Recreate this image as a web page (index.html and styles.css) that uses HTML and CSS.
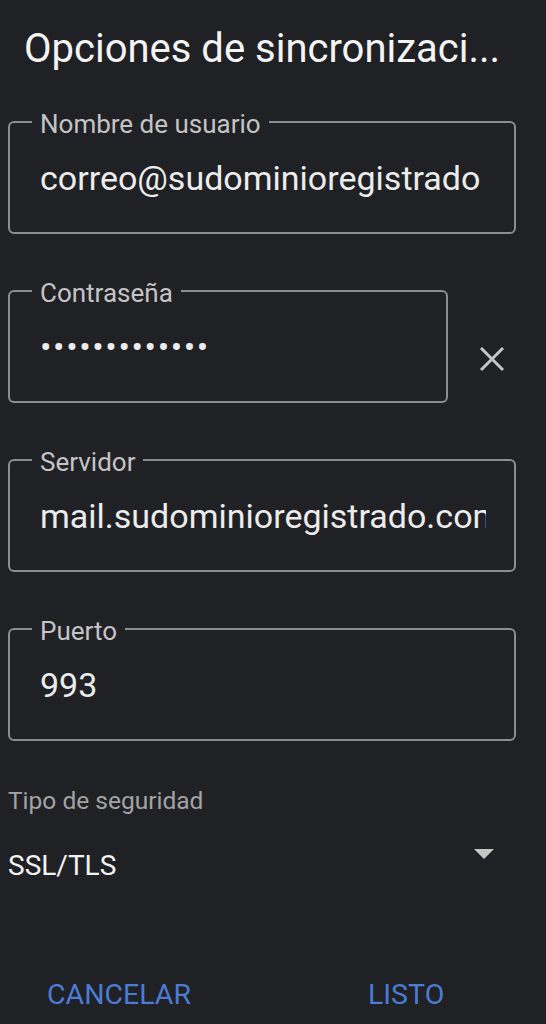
FILE: index.html
```html
<!DOCTYPE html>
<html lang="es">
<head>
  <meta charset="UTF-8" />
  <meta name="viewport" content="width=device-width, initial-scale=1.0" />
  <title>Opciones de sincronización</title>
  <link rel="stylesheet" href="styles.css">
</head>
<body>
  <h1 class="title">Opciones de sincronizaci...</h1>

  <form class="sync-form">
    <fieldset class="field">
      <legend>Nombre de usuario</legend>
      <div class="value">correo@sudominioregistrado</div>
    </fieldset>

    <div class="field-row">
      <fieldset class="field field-short">
        <legend>Contraseña</legend>
        <div class="value dots">•••••••••••••</div>
      </fieldset>
      <button type="button" class="clear-btn" aria-label="Borrar">
        <svg width="26" height="26" viewBox="0 0 26 26">
          <path d="M2 2 L24 24 M24 2 L2 24" stroke="#c6c6c6" stroke-width="3" fill="none" />
        </svg>
      </button>
    </div>

    <fieldset class="field">
      <legend>Servidor</legend>
      <div class="value">mail.sudominioregistrado.com</div>
    </fieldset>

    <fieldset class="field">
      <legend>Puerto</legend>
      <div class="value">993</div>
    </fieldset>

    <div class="select-label">Tipo de seguridad</div>
    <div class="select">
      <span>SSL/TLS</span>
      <svg class="arrow" width="20" height="10" viewBox="0 0 20 10">
        <path d="M0 0 L20 0 L10 10 Z" fill="#c6c6c6" />
      </svg>
    </div>
  </form>

  <div class="actions">
    <button type="button" class="text-btn">CANCELAR</button>
    <button type="button" class="text-btn">LISTO</button>
  </div>
</body>
</html>
```

FILE: styles.css
```css
body {
  margin: 0;
  background-color: #202124;
  color: #e8e8e8;
  font-family: Roboto, "Liberation Sans", sans-serif;
}
.title {
  margin: 25px 0 0 24px;
  font-size: 40px;
  line-height: 48px;
  font-weight: 400;
  color: #f4f4f4;
  white-space: nowrap;
}
.sync-form {
  margin-top: 34px;
  padding-left: 8px;
}
.field {
  width: 508px;
  min-width: 0;
  box-sizing: border-box;
  margin: 0 0 42px 0;
  padding: 21px 28px 34px 30px;
  border: 2px solid #8d8d8f;
  border-radius: 6px;
}
.field legend {
  margin-left: -8px;
  padding: 4px 8px 0;
  font-size: 26px;
  line-height: 26px;
  color: #c4c4c6;
}
.field-row {
  display: flex;
  align-items: flex-start;
}
.field-short {
  width: 440px;
}
.clear-btn {
  width: 88px;
  height: 48px;
  margin-top: 59px;
  padding: 0;
  border: none;
  background: none;
  display: flex;
  align-items: center;
  justify-content: center;
}
.value {
  font-size: 34px;
  line-height: 40px;
  white-space: nowrap;
  overflow: hidden;
  color: #ececec;
}
.dots {
  letter-spacing: 1.6px;
}
.select-label {
  padding-top: 4px;
  font-size: 24.5px;
  line-height: 28px;
  color: #a3a3a5;
}
.select {
  display: flex;
  justify-content: space-between;
  align-items: flex-start;
  margin-top: 34px;
  padding-right: 52px;
  font-size: 28px;
  line-height: 34px;
  color: #f2f2f2;
}
.actions {
  display: flex;
  gap: 161px;
  margin-top: 95px;
  padding-left: 39px;
}
.text-btn {
  padding: 0 8px;
  border: none;
  background: none;
  font-family: Roboto, "Liberation Sans", sans-serif;
  font-size: 28.5px;
  line-height: 34px;
  color: #4b7bd4;
}
```
